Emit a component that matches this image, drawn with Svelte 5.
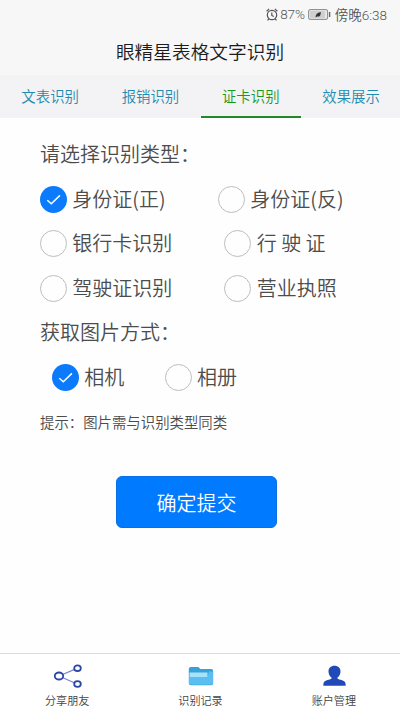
<script>
  const tabs = ['文表识别', '报销识别', '证卡识别', '效果展示'];
  let activeTab = $state(2);

  const types = [
    [{ id: 'front', label: '身份证(正)' }, { id: 'back', label: '身份证(反)' }],
    [{ id: 'bank', label: '银行卡识别' }, { id: 'vehicle', label: '行 驶 证' }],
    [{ id: 'driver', label: '驾驶证识别' }, { id: 'business', label: '营业执照' }]
  ];
  let type = $state('front');

  const sources = [{ id: 'camera', label: '相机' }, { id: 'album', label: '相册' }];
  let source = $state('camera');
</script>

{#snippet radio(item, checked, select)}
  <button class="option" type="button" role="radio" aria-checked={checked} onclick={select}>
    <span class="circle" class:checked>
      {#if checked}
        <svg viewBox="0 0 27 27" width="27" height="27">
          <path d="M7.3 14.2l4 3.6 8.6-8.4" fill="none" stroke="#fff" stroke-width="1.5" />
        </svg>
      {/if}
    </span>
    <span class="option-label">{item.label}</span>
  </button>
{/snippet}

<div class="page">
  <!-- Status bar -->
  <div class="status">
    <svg class="alarm" viewBox="0 0 12 13" width="12" height="13" fill="none" stroke="#555" stroke-width="1.2">
      <circle cx="6" cy="7" r="4.7" />
      <path d="M.6 3.2L3.2.9M11.4 3.2L8.8.9M2.8 10.8l-1.3 1.5M9.2 10.8l1.3 1.5M5.8 4.4v3l2 1.2" />
    </svg>
    <span class="percent">87%</span>
    <svg class="battery" viewBox="0 0 23 11" width="23" height="11">
      <rect x=".6" y=".6" width="19" height="9.8" rx="1.5" fill="#e8e8e8" stroke="#888" />
      <rect x="2" y="2" width="15" height="7" fill="#cfcfcf" />
      <path d="M21.6 3v5" stroke="#666" stroke-width="1.4" />
      <path d="M7.6 8.4c-.1-3 1.500-4.900 5.200-5.500.1 3.400-1.200 5.200-3.700 4.600z" fill="#333" />
    </svg>
    <span class="time">傍晚6:38</span>
  </div>

  <header>眼精星表格文字识别</header>

  <nav class="tabs">
    {#each tabs as tab, i}
      <button class="tab" class:active={i === activeTab} type="button" onclick={() => activeTab = i}>{tab}</button>
    {/each}
  </nav>

  <main>
    <div class="line heading">请选择识别类型：</div>
    {#each types as row, i}
      <div class="line row" class:wide={i > 0}>
        {#each row as item}
          {@render radio(item, type === item.id, () => type = item.id)}
        {/each}
      </div>
    {/each}

    <div class="line heading">获取图片方式：</div>
    <div class="line sources">
      {#each sources as item}
        {@render radio(item, source === item.id, () => source = item.id)}
      {/each}
    </div>

    <div class="line hint">提示：图片需与识别类型同类</div>
    <button class="submit" type="button">确定提交</button>
  </main>

  <!-- Bottom bar -->
  <footer>
    <div class="foot-item">
      <svg viewBox="0 0 28 24" width="28" height="24" fill="none">
        <path d="M5 12L23 4.3M5 12l18 8" stroke="#7289cf" stroke-width="1.3" />
        <g fill="#fff" stroke="#2c46a5" stroke-width="1.8">
          <ellipse cx="5" cy="12" rx="4.2" ry="3.5" />
          <ellipse cx="23.5" cy="4.2" rx="3.3" ry="2.8" />
          <ellipse cx="23.5" cy="20" rx="3.3" ry="2.8" />
        </g>
      </svg>
      <span>分享朋友</span>
    </div>
    <div class="foot-item">
      <svg viewBox="0 0 28 24" width="28" height="24">
        <path d="M1.8 5q0-2 2-2h7q1.2 0 1.7 1l.5 1h11.2q2 0 2 2v12.2q0 2-2 2H3.8q-2 0-2-2z" fill="#35a3da" />
        <path d="M2 12.8h18.5l1.5-5.3h4v11.5q0 1.7-1.8 1.7H3.8q-1.8 0-1.8-1.7z" fill="#5abff0" />
        <path d="M2.5 8.5h18v4.5h-18z" fill="#a9e2f8" />
      </svg>
      <span>识别记录</span>
    </div>
    <div class="foot-item">
      <svg viewBox="0 0 28 24" width="28" height="24">
        <path d="M14.5 1.8c3.7 0 6 2.3 6 5.6 0 2.6-1.2 4.8-3 6v1.2c0 .8 5.3 1.4 7 3 .9.8 1.2 2.3 1.2 4.2H3.300c0-1.900.3-3.400 1.200-4.200 1.700-1.600 7-2.200 7-3v-1.200c-1.800-1.200-3-3.400-3-6 0-3.300 2.300-5.600 6-5.600z" fill="#2149b8" />
      </svg>
      <span>账户管理</span>
    </div>
  </footer>
</div>

<style>
  :global(body) {
    background: #fff;
  }

  .page {
    display: flex;
    flex-direction: column;
    height: 711px;
    overflow: hidden;
    background: #fefefe;
    font-family: "Noto Sans CJK SC", sans-serif;
    font-weight: 350;
    color: #4c4c4c;
  }

  button {
    padding: 0;
    border: 0;
    background: none;
    font: inherit;
    color: inherit;
    cursor: pointer;
  }

  .status {
    display: flex;
    align-items: center;
    justify-content: flex-end;
    height: 28px;
    padding-right: 13px;
    background: #f7f7f8;
    font-family: Roboto, "Noto Sans CJK SC", sans-serif;
    font-size: 13.5px;
    color: #555;
  }

  .percent {
    margin: 0 3px 0 2px;
    letter-spacing: -0.2px;
  }

  .time {
    margin-left: 4px;
  }

  header {
    height: 47px;
    background: #f7f7f8;
    font-size: 18.7px;
    line-height: 46px;
    text-align: center;
    color: #1c1c1c;
  }

  /* --- Tabs --- */
  .tabs {
    display: flex;
    height: 43px;
    background: #f3f3f5;
  }

  .tab {
    box-sizing: border-box;
    width: 100.3px;
    flex-shrink: 0;
    height: 43px;
    border-bottom: 2px solid transparent;
    font-size: 14.4px;
    color: #1f8bb0;
  }

  .tab.active {
    border-color: #23882a;
    color: #199a1e;
  }

  /* --- Form --- */
  main {
    flex: 1;
    display: flex;
    flex-direction: column;
    padding: 15px 40px 0;
  }

  .line {
    display: flex;
    align-items: center;
    height: 44.4px;
    flex-shrink: 0;
  }

  .heading {
    font-size: 20px;
    line-height: 42px;
    align-items: flex-start;
  }

  .row {
    display: grid;
    grid-template-columns: 178px 1fr;
  }

  .row.wide {
    grid-template-columns: 184.4px 1fr;
  }

  .sources {
    gap: 40.3px;
    padding-left: 12px;
  }

  .option {
    display: flex;
    align-items: center;
    gap: 5.3px;
    font-size: 20px;
    line-height: 27px;
    white-space: pre;
  }

  .option-label {
    padding-bottom: 2px;
  }

  .circle {
    box-sizing: border-box;
    width: 27px;
    height: 27px;
    border: 1px solid #bdbdbd;
    border-radius: 50%;
  }

  .circle.checked {
    border: 0;
    background: #0b7bfb;
  }

  .circle svg {
    display: block;
  }

  .hint {
    font-size: 14.4px;
  }

  .submit {
    align-self: center;
    width: 161px;
    height: 52px;
    padding-top: 2px;
    margin: 32px 0 0 -7px;
    border: 1px solid #0a6fe0;
    border-radius: 6px;
    background: #007aff;
    font-size: 20px;
    color: #fff;
  }

  /* --- Bottom bar --- */
  footer {
    display: flex;
    height: 57px;
    border-top: 1px solid #dcdcdc;
    background: #fff;
  }

  .foot-item {
    flex: 1;
    display: flex;
    flex-direction: column;
    align-items: center;
    padding-top: 10px;
    font-size: 11.1px;
    line-height: 16px;
    color: #444;
  }

  .foot-item svg {
    margin-left: 2px;
  }

  .foot-item span {
    margin: 4px 0 0 1px;
  }
</style>
